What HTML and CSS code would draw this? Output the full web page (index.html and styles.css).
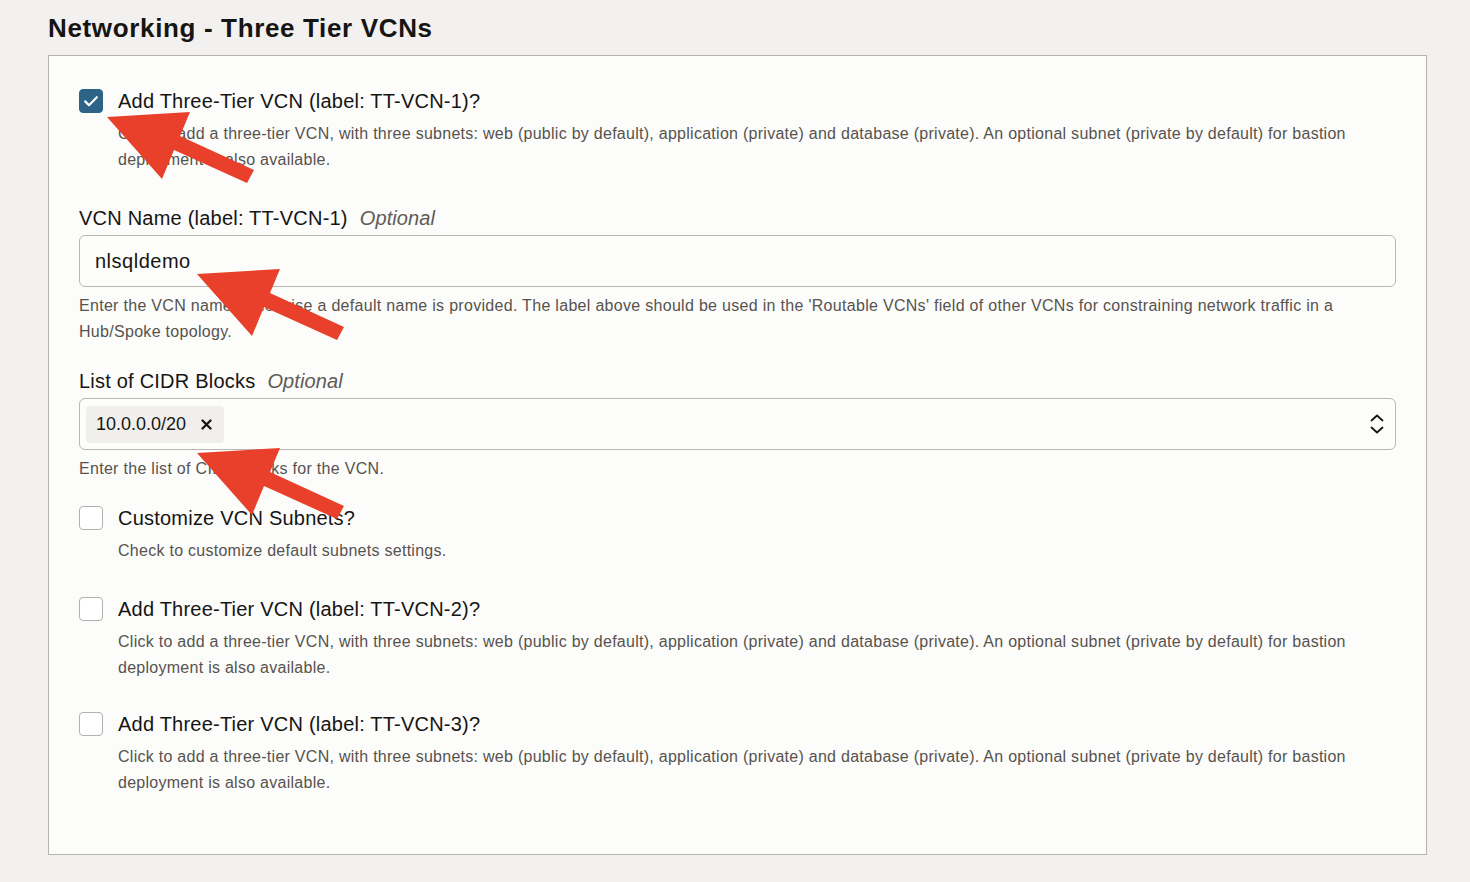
FILE: index.html
```html
<!DOCTYPE html>
<html lang="en">
<head>
<meta charset="utf-8">
<title>Networking - Three Tier VCNs</title>
<link rel="stylesheet" href="styles.css">
</head>
<body>
<div class="page">
  <h1 class="title">Networking - Three Tier VCNs</h1>
  <section class="panel">
    <div class="check-field">
      <div class="check-row">
        <span class="checkbox checked">
          <svg width="24" height="24" viewBox="0 0 24 24"><path d="M6.2 12.4 L10 16.2 L17.8 8.2" fill="none" stroke="#ffffff" stroke-width="2.2" stroke-linecap="round" stroke-linejoin="round"/></svg>
        </span>
        <span class="check-label">Add Three-Tier VCN (label: TT-VCN-1)?</span>
      </div>
      <p class="check-desc">Click to add a three-tier VCN, with three subnets: web (public by default), application (private) and database (private). An optional subnet (private by default) for bastion deployment is also available.</p>
    </div>

    <div class="text-field">
      <label class="field-label">VCN Name (label: TT-VCN-1)<span class="optional">Optional</span></label>
      <div class="input">nlsqldemo</div>
      <p class="help">Enter the VCN name, otherwise a default name is provided. The label above should be used in the 'Routable VCNs' field of other VCNs for constraining network traffic in a Hub/Spoke topology.</p>
    </div>

    <div class="text-field">
      <label class="field-label">List of CIDR Blocks<span class="optional">Optional</span></label>
      <div class="input select">
        <span class="chip">10.0.0.0/20<span class="chip-x">
          <svg width="11" height="11" viewBox="0 0 11 11"><path d="M1.5 1.5 L9.5 9.5 M9.5 1.5 L1.5 9.5" stroke="#161513" stroke-width="2.3" stroke-linecap="round"/></svg>
        </span></span>
        <span class="chevron">
          <svg width="14" height="22" viewBox="0 0 14 22"><path d="M1.5 7.5 L7 2.5 L12.5 7.5 M1.5 14.5 L7 19.5 L12.5 14.5" fill="none" stroke="#161513" stroke-width="1.8" stroke-linecap="round" stroke-linejoin="round"/></svg>
        </span>
      </div>
      <p class="help">Enter the list of CIDR blocks for the VCN.</p>
    </div>

    <div class="check-field">
      <div class="check-row">
        <span class="checkbox"></span>
        <span class="check-label">Customize VCN Subnets?</span>
      </div>
      <p class="check-desc">Check to customize default subnets settings.</p>
    </div>

    <div class="check-field tight">
      <div class="check-row">
        <span class="checkbox"></span>
        <span class="check-label">Add Three-Tier VCN (label: TT-VCN-2)?</span>
      </div>
      <p class="check-desc">Click to add a three-tier VCN, with three subnets: web (public by default), application (private) and database (private). An optional subnet (private by default) for bastion deployment is also available.</p>
    </div>

    <div class="check-field last">
      <div class="check-row">
        <span class="checkbox"></span>
        <span class="check-label">Add Three-Tier VCN (label: TT-VCN-3)?</span>
      </div>
      <p class="check-desc">Click to add a three-tier VCN, with three subnets: web (public by default), application (private) and database (private). An optional subnet (private by default) for bastion deployment is also available.</p>
    </div>
  </section>

  <svg class="arrow arrow-1" width="152" height="76" viewBox="0 0 152 76"><polygon points="2,7 85,2 75,26 149,60 142,73 69,40 57,69" fill="#e8402a"/></svg>
  <svg class="arrow arrow-2" width="152" height="76" viewBox="0 0 152 76"><polygon points="2,7 85,2 75,26 149,60 142,73 69,40 57,69" fill="#e8402a"/></svg>
  <svg class="arrow arrow-3" width="152" height="76" viewBox="0 0 152 76"><polygon points="2,7 85,2 75,26 149,60 142,73 69,40 57,69" fill="#e8402a"/></svg>
</div>
</body>
</html>
```

FILE: styles.css
```css
* { box-sizing: border-box; }

html, body {
  margin: 0;
  padding: 0;
  background: #f2f1ef;
}

body {
  font-family: "Liberation Sans", Arial, Helvetica, sans-serif;
  color: #161513;
}

.page {
  position: relative;
  width: 1470px;
  height: 882px;
  overflow: hidden;
  padding: 12px 0 0 48px;
}

.title {
  margin: 0;
  font-size: 26px;
  line-height: 32px;
  font-weight: 700;
  letter-spacing: 0.65px;
  color: #161513;
}

.panel {
  margin-top: 11px;
  width: 1379px;
  height: 800px;
  background: #fcfcfb;
  border: 1px solid #b5b3b0;
  padding: 33px 30px 0 30px;
  display: flex;
  flex-direction: column;
}

.check-field { margin-bottom: 33px; }
.check-field.tight { margin-bottom: 31px; }
.check-field.last { margin-bottom: 0; }

.check-row {
  display: flex;
  align-items: center;
  gap: 15px;
  height: 24px;
}

.checkbox {
  width: 24px;
  height: 24px;
  flex: none;
  border: 1px solid #b3b1ae;
  border-radius: 4px;
  background: #ffffff;
  display: flex;
}

.checkbox.checked {
  background: #2c6386;
  border-color: #2c6386;
}

.checkbox.checked svg { margin: -1px; }

.check-label {
  font-size: 20px;
  line-height: 24px;
  letter-spacing: 0.22px;
}

.check-desc {
  margin: 8px 0 0 39px;
  font-size: 16px;
  line-height: 26px;
  letter-spacing: 0.27px;
  color: #57534e;
}

.text-field { margin-bottom: 24px; }

.field-label {
  display: block;
  font-size: 20px;
  line-height: 24px;
  letter-spacing: 0.22px;
  margin-bottom: 5px;
}

.optional {
  font-style: italic;
  color: #5f5b56;
  margin-left: 12px;
  letter-spacing: 0.1px;
}

.input {
  height: 52px;
  border: 1px solid #b9b7b4;
  border-radius: 6px;
  background: #fdfdfc;
  padding: 0 15px;
  display: flex;
  align-items: center;
  font-size: 20px;
  letter-spacing: 0.5px;
}

.select {
  padding: 0 11px 0 6px;
  justify-content: space-between;
  letter-spacing: 0;
}

.chip {
  display: flex;
  align-items: center;
  height: 37px;
  padding: 0 12px 0 10px;
  background: #f1efed;
  border-radius: 4px;
  font-size: 18px;
  margin-top: 1px;
}

.chip-x {
  display: flex;
  margin-left: 15px;
}

.chevron { display: flex; }

.help {
  margin: 6px 0 0 0;
  font-size: 16px;
  line-height: 26px;
  letter-spacing: 0.3px;
  color: #57534e;
}

.arrow {
  position: absolute;
}

.arrow-1 { left: 105px; top: 110px; }
.arrow-2 { left: 195px; top: 267px; }
.arrow-3 { left: 195px; top: 446px; }
```
